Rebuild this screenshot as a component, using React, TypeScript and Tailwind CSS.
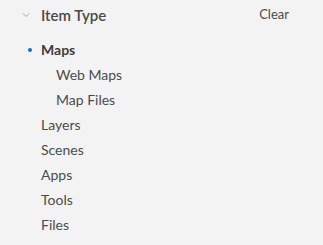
import { ChevronDown } from 'lucide-react';

const types = ['Layers', 'Scenes', 'Apps', 'Tools', 'Files'];

export default function App() {
  return (
    <div className="w-[323px] h-[245px] bg-[#f3f3f3] font-['Lato',sans-serif] text-[#4c4c4c]">
      {/* header */}
      <div className="flex items-center h-[30px] pl-[20px] pr-[34px]">
        <ChevronDown className="w-[12px] h-[12px] text-[#7a7a7a]" strokeWidth={1.25} />
        <span className="ml-[9px] text-[15px] font-semibold text-[#4a4a4a]">Item Type</span>
        <span className="ml-auto text-[13px] text-[#4c4c4c]">Clear</span>
      </div>

      <ul className="mt-[7px] flex flex-col text-[14px]">
        <li className="flex items-center h-[25px]">
          <span className="w-[4px] h-[4px] rounded-full bg-[#007ac2] ml-[28px] mr-[9px]" />
          <span className="font-bold text-[#3d3d3d]">Maps</span>
        </li>
        <li className="h-[25px] flex items-center pl-[56px]">Web Maps</li>
        <li className="h-[25px] flex items-center pl-[56px]">Map Files</li>
        {types.map((t) => (
          <li key={t} className="h-[25px] flex items-center pl-[41px]">{t}</li>
        ))}
      </ul>
    </div>
  );
}
